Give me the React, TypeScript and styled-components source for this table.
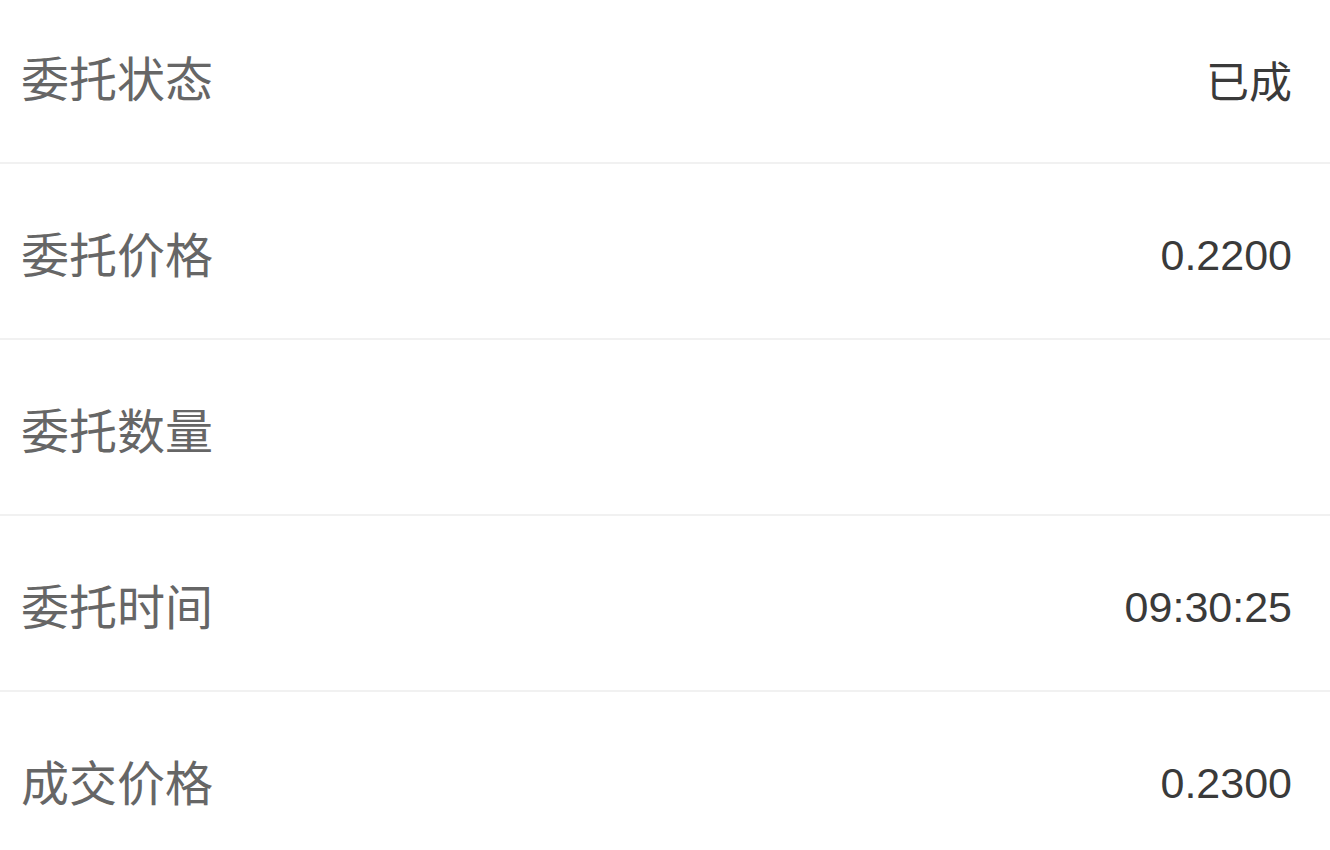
import styled, { createGlobalStyle } from 'styled-components';

const GlobalStyle = createGlobalStyle`
  html, body {
    margin: 0;
    padding: 0;
    background: #ffffff;
  }
`;

const rows = [
  { label: '委托状态', value: '已成' },
  { label: '委托价格', value: '0.2200' },
  { label: '委托数量', value: '' },
  { label: '委托时间', value: '09:30:25' },
  { label: '成交价格', value: '0.2300' },
];

export default function App() {
  return (
    <>
      <GlobalStyle />
      <St.Viewport>
        {/* list is scrolled a little, first row is partly hidden */}
        <St.List>
          {rows.map((row) => (
            <St.Row key={row.label}>
              <St.Label>{row.label}</St.Label>
              <St.Value>{row.value}</St.Value>
            </St.Row>
          ))}
        </St.List>
      </St.Viewport>
    </>
  );
}

const St = {
  Viewport: styled.div`
    width: 1330px;
    height: 850px;
    overflow: hidden;
    background: #ffffff;
  `,
  List: styled.div`
    margin-top: -12px;
  `,
  Row: styled.div`
    display: flex;
    align-items: center;
    justify-content: space-between;
    height: 174px;
    padding: 0 38px 0 21px;
    border-bottom: 2px solid #f1f1f1;

    &:last-child {
      border-bottom: none;
    }
  `,
  Label: styled.div`
    padding-top: 2px;
    font-family: "Noto Sans CJK SC", sans-serif;
    font-size: 48px;
    color: #666666;
  `,
  Value: styled.div`
    padding-top: 8px;
    font-family: "Liberation Sans", "Noto Sans CJK SC", sans-serif;
    font-size: 43px;
    color: #3a3a3a;
  `,
};
